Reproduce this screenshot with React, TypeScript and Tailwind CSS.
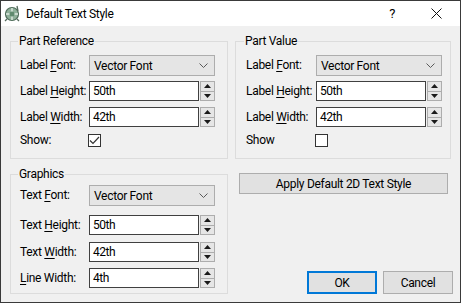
import React from 'react';

const font = { fontFamily: 'Roboto, "Liberation Sans", Arial, sans-serif', letterSpacing: '-0.3px' };

function Label({ pre, u, post, w }: { pre: string; u: string; post: string; w: string }) {
  return (
    <span className={`${w} shrink-0 whitespace-nowrap text-[12px] text-black leading-[15px]`}>
      {pre}
      <span className="underline underline-offset-2">{u}</span>
      {post}
    </span>
  );
}

function Combo() {
  return (
    <div className="w-[126px] h-[21px] border border-[#adadad] bg-[#e5e5e5] flex items-center justify-between pl-[4px] pr-[6px]">
      <span className="text-[12px] text-black">Vector Font</span>
      <svg width="9" height="6" viewBox="0 0 9 6">
        <path d="M0.5 0.5 L4.5 4.5 L8.5 0.5" fill="none" stroke="#5a5a5a" strokeWidth="1" />
      </svg>
    </div>
  );
}

function Spin({ value }: { value: string }) {
  return (
    <div className="flex h-[20px]">
      <div className="w-[110px] h-full border border-[#404040] bg-white flex items-center pl-[3px]">
        <span className="text-[12px] text-black tracking-[-0.5px]">{value}</span>
      </div>
      <div className="ml-[1px] w-[15px] h-full flex flex-col border border-[#adadad] bg-[#e6e6e6]">
        <div className="flex-1 flex items-center justify-center border-b border-[#adadad]">
          <svg width="7" height="4" viewBox="0 0 7 4"><path d="M0 4 L3.5 0 L7 4 Z" fill="#1a1a1a" /></svg>
        </div>
        <div className="flex-1 flex items-center justify-center">
          <svg width="7" height="4" viewBox="0 0 7 4"><path d="M0 0 L3.5 4 L7 0 Z" fill="#1a1a1a" /></svg>
        </div>
      </div>
    </div>
  );
}

function Check({ checked }: { checked: boolean }) {
  return (
    <div className="w-[13px] h-[13px] border border-[#333333] bg-white flex items-center justify-center">
      {checked && (
        <svg width="11" height="9" viewBox="0 0 11 9">
          <path d="M1 4.5 L4 7.5 L10 1" fill="none" stroke="#333333" strokeWidth="1.2" />
        </svg>
      )}
    </div>
  );
}

function Group({ title, children, cls }: { title: string; children: React.ReactNode; cls: string }) {
  return (
    <fieldset className={`border border-[#dcdcdc] ${cls}`}>
      <legend className="-ml-[2px] px-[1px] text-[12px] leading-[15px] text-black">{title}</legend>
      {children}
    </fieldset>
  );
}

export default function App() {
  return (
    <div style={font} className="w-[461px] h-[303px] border border-[#3a3a3a] flex flex-col bg-[#f0f0f0] overflow-hidden">
      <div className="h-[25px] bg-white flex items-center shrink-0">
        <svg className="ml-[3px]" width="17" height="17" viewBox="0 0 17 17">
          <circle cx="8" cy="9" r="6.5" fill="#8fb09a" stroke="#4d6b58" strokeWidth="1.2" />
          <path d="M8 3 V15 M2 9 H14" stroke="#dfe9e2" strokeWidth="1.4" />
          <circle cx="8" cy="9" r="2.5" fill="#5f8a6e" />
          <path d="M13 1 L14 6 M3 14 L1 16 M13 14 L15 16" stroke="#556b5d" strokeWidth="1.3" />
        </svg>
        <span className="ml-[5px] text-[12px] text-black">Default Text Style</span>
        <span className="ml-auto mr-[36px] text-[13px] text-black">?</span>
        <svg className="mr-[18px]" width="11" height="11" viewBox="0 0 11 11">
          <path d="M0.5 0.5 L10.5 10.5 M10.5 0.5 L0.5 10.5" stroke="#111111" strokeWidth="1" />
        </svg>
      </div>

      <div className="flex-1 flex pl-[9px] pt-[8px]">
        <div className="w-[218px] flex flex-col">
          <Group title="Part Reference" cls="h-[125px] pl-[9px] pt-[6px]">
            <div className="flex items-center">
              <Label pre="Label " u="F" post="ont:" w="w-[69px]" />
              <Combo />
            </div>
            <div className="flex items-center mt-[5px]">
              <Label pre="Label " u="H" post="eight:" w="w-[69px]" />
              <Spin value="50th" />
            </div>
            <div className="flex items-center mt-[6px]">
              <Label pre="Label " u="W" post="idth:" w="w-[69px]" />
              <Spin value="42th" />
            </div>
            <div className="flex items-center mt-[6px]">
              <Label pre="Show:" u="" post="" w="w-[68px]" />
              <Check checked={true} />
            </div>
          </Group>

          <Group title="Graphics" cls="mt-[8px] h-[127px] pl-[9px] pt-[3px]">
            <div className="flex items-center">
              <Label pre="Text " u="F" post="ont:" w="w-[69px]" />
              <Combo />
            </div>
            <div className="flex items-center mt-[9px]">
              <Label pre="Text " u="H" post="eight:" w="w-[69px]" />
              <Spin value="50th" />
            </div>
            <div className="flex items-center mt-[7px]">
              <Label pre="Text " u="W" post="idth:" w="w-[69px]" />
              <Spin value="42th" />
            </div>
            <div className="flex items-center mt-[6px]">
              <Label pre="" u="L" post="ine Width:" w="w-[69px]" />
              <Spin value="4th" />
            </div>
          </Group>
        </div>

        <div className="ml-[7px] w-[218px] flex flex-col">
          <Group title="Part Value" cls="w-[216px] h-[125px] pl-[10px] pt-[6px]">
            <div className="flex items-center">
              <Label pre="Label " u="F" post="ont:" w="w-[70px]" />
              <Combo />
            </div>
            <div className="flex items-center mt-[5px]">
              <Label pre="Label " u="H" post="eight:" w="w-[70px]" />
              <Spin value="50th" />
            </div>
            <div className="flex items-center mt-[6px]">
              <Label pre="Label " u="W" post="idth:" w="w-[70px]" />
              <Spin value="42th" />
            </div>
            <div className="flex items-center mt-[6px]">
              <Label pre="Show" u="" post="" w="w-[69px]" />
              <Check checked={false} />
            </div>
          </Group>

          <button className="mt-[14px] ml-[4px] w-[209px] h-[21px] border border-[#adadad] bg-[#e1e1e1] text-[12px] text-black">
            Apply Default 2D Text Style
          </button>

          <div className="mt-auto mb-[8px] flex gap-[6px] ml-[72px]">
            <button className="w-[70px] h-[23px] border-2 border-[#0078d7] bg-[#e1e1e1] text-[12px] text-black">
              OK
            </button>
            <button className="w-[70px] h-[23px] border border-[#adadad] bg-[#e1e1e1] text-[12px] text-black">
              Cancel
            </button>
          </div>
        </div>
      </div>
    </div>
  );
}
